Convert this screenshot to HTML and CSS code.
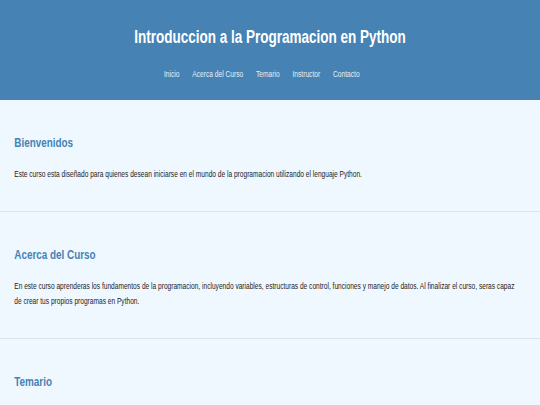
FILE: index.html
```html
<!DOCTYPE html>
<html lang="es">
<head>
    <meta charset="UTF-8">
    <meta name="viewport" content="width=device-width, initial-scale=1.0">
    <title>Introduccion a la Programacion en Python</title>
    <link rel="stylesheet" href="styles.css">
</head>
<body>
    <div class="page">
        <header>
            <h1>Introduccion a la Programacion en Python</h1>
            <nav>
                <a href="#inicio">Inicio</a>
                <a href="#acerca">Acerca del Curso</a>
                <a href="#temario">Temario</a>
                <a href="#instructor">Instructor</a>
                <a href="#contacto">Contacto</a>
            </nav>
        </header>

        <section id="inicio">
            <h2>Bienvenidos</h2>
            <p>Este curso esta diseñado para quienes desean iniciarse en el mundo de la programacion utilizando el lenguaje Python.</p>
        </section>

        <section id="acerca">
            <h2>Acerca del Curso</h2>
            <p>En este curso aprenderas los fundamentos de la programacion, incluyendo variables, estructuras de control, funciones y manejo de datos. Al finalizar el curso, seras capaz de crear tus propios programas en Python.</p>
        </section>

        <section id="temario">
            <h2>Temario</h2>
            <ul>
                <li>Introduccion a Python</li>
                <li>Variables y tipos de datos</li>
                <li>Estructuras de control</li>
                <li>Funciones</li>
            </ul>
        </section>
    </div>
</body>
</html>
```

FILE: styles.css
```css
html, body {
    overflow: hidden;
}
body {
    font-family: "Liberation Sans", Arial, sans-serif;
    background-color: #f0f8ff;
    color: #222;
    margin: 0;
    padding: 0;
}
/* the page is drawn wide and squeezed to the window, like the original capture */
.page {
    width: 720px;
    transform: scaleX(0.75);
    transform-origin: 0 0;
}
header {
    background-color: #4682b4;
    color: #fff;
    text-align: center;
    padding: 26px 18px 20px;
}
header h1 {
    margin: 0;
    font-size: 18px;
    line-height: 22px;
}
nav {
    margin-top: 21px;
    padding-right: 22px;
    display: flex;
    justify-content: center;
    gap: 17px;
    font-size: 8.9px;
    line-height: 11px;
}
nav a {
    color: #e6eef5;
    text-decoration: none;
}
section {
    padding: 34px 29px 28px 19px;
    border-bottom: 1px solid #dde3ea;
}
section h2 {
    margin: 0 0 16px;
    font-size: 13.2px;
    line-height: 17px;
    color: #4682b4;
}
section p {
    margin: 0;
    font-size: 8.8px;
    line-height: 15.6px;
}
section ul {
    margin: 0;
    font-size: 8.8px;
    line-height: 15.6px;
}
```
